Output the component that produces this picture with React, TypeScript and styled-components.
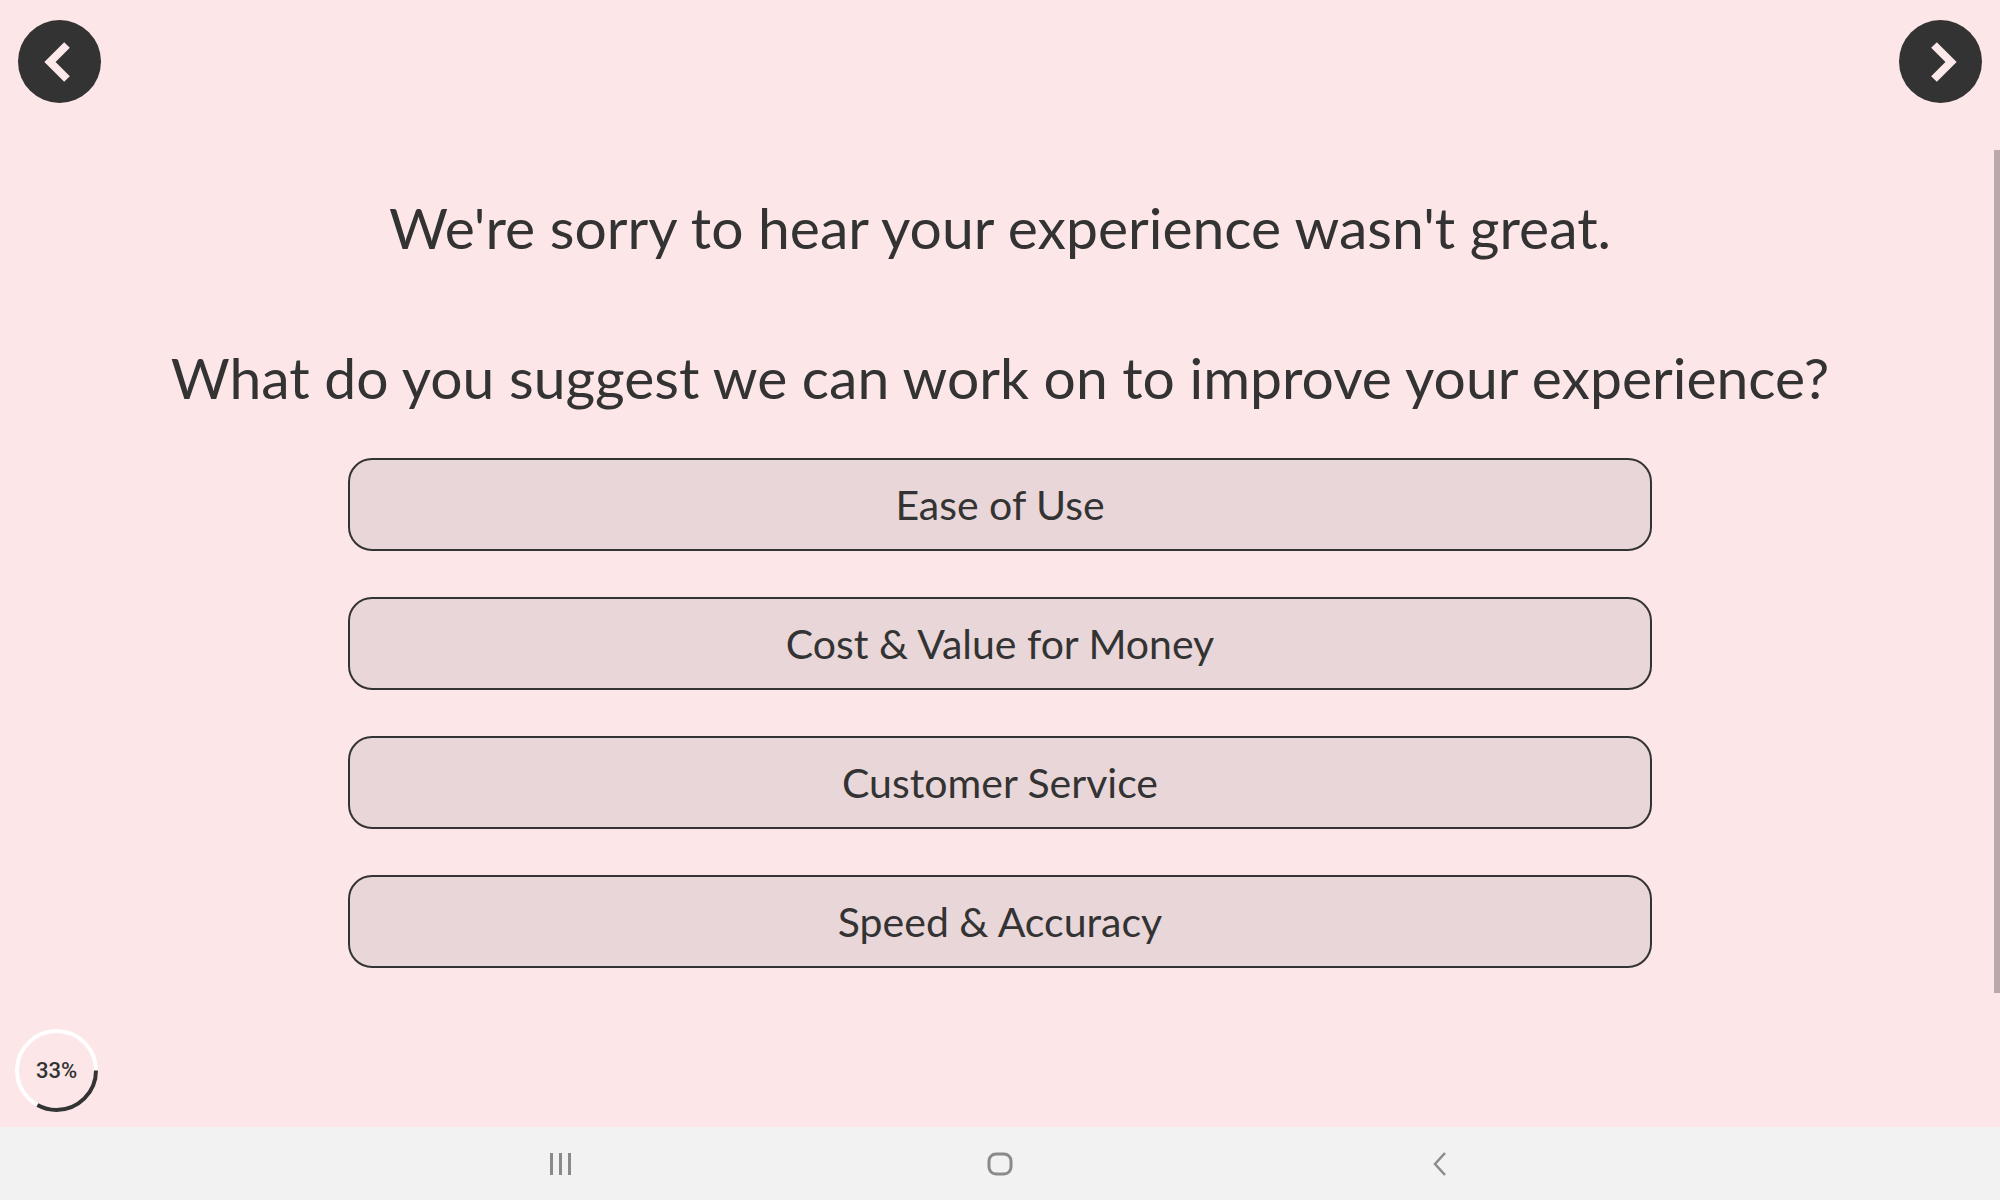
import React from "react";
import styled, {createGlobalStyle} from "styled-components";

const GlobalStyle = createGlobalStyle`
  html, body {
    margin: 0;
    padding: 0;
    background: #fde6e8;
  }
  * {
    box-sizing: border-box;
  }
`

const Screen = styled.div`
  width: 2000px;
  height: 1200px;
  display: flex;
  flex-direction: column;
  overflow: hidden;
  font-family: 'Lato', 'Noto Sans', sans-serif;
  color: #333333;
`

const Main = styled.div`
  position: relative;
  flex: 1;
  display: flex;
  flex-direction: column;
  background: #fde6e8;
`

const TopBar = styled.div`
  display: flex;
  justify-content: space-between;
  padding: 20px 18px 0 18px;
`

const RoundButton = styled.button<{ $dir: "left" | "right" }>`
  width: 83px;
  height: 83px;
  border-radius: 50%;
  border: none;
  padding: 0;
  margin: 0;
  background: #333333;
  display: flex;
  align-items: center;
  justify-content: center;
  cursor: pointer;

  svg {
    display: block;
    margin-left: ${p => p.$dir === "left" ? "-6px" : "6px"};
  }
`

const Content = styled.div`
  display: flex;
  flex-direction: column;
  align-items: center;
  margin-top: 96px;
`

const Heading = styled.h1<{ $gap: number }>`
  margin: 0 0 ${p => p.$gap}px 0;
  font-size: 57px;
  line-height: 1;
  font-weight: 400;
  text-align: center;
  white-space: nowrap;
`

const Options = styled.div`
  display: flex;
  flex-direction: column;
  gap: 46px;
`

const Option = styled.button`
  width: 1304px;
  height: 93px;
  border: 2px solid #333333;
  border-radius: 24px;
  background: #e9d6d8;
  color: #333333;
  font-family: 'Lato', 'Noto Sans', sans-serif;
  font-size: 41px;
  line-height: 1;
  display: flex;
  align-items: center;
  justify-content: center;
  cursor: pointer;
`

const Footer = styled.div`
  margin-top: auto;
  padding: 0 0 15px 15px;
`

const Progress = styled.div`
  position: relative;
  width: 83px;
  height: 83px;
  display: flex;
  align-items: center;
  justify-content: center;
`

const ProgressLabel = styled.span`
  position: relative;
  font-family: 'Roboto', 'Liberation Sans', sans-serif;
  font-size: 22px;
  font-weight: 500;
  color: #333333;
`

const Ring = styled.svg`
  position: absolute;
  inset: 0;
`

const Scrollbar = styled.div`
  position: absolute;
  right: 0;
  top: 150px;
  width: 6px;
  height: 843px;
  background: #b9a9aa;
`

const NavBar = styled.div`
  height: 73px;
  background: #f2f2f2;
  display: flex;
  justify-content: center;
  align-items: center;
  gap: 400px;
`

const NavSlot = styled.div`
  width: 40px;
  height: 40px;
  display: flex;
  align-items: center;
  justify-content: center;
`

const options = ["Ease of Use", "Cost & Value for Money", "Customer Service", "Speed & Accuracy"];

const ProgressRing = ({value}: { value: number }) => {
  const r = 39.5;
  const c = 2 * Math.PI * r;
  return (
    <Progress>
      <Ring width="83" height="83" viewBox="0 0 83 83">
        <circle cx="41.5" cy="41.5" r={r} fill="none" stroke="#ffffff" strokeWidth="4"/>
        <circle cx="41.5" cy="41.5" r={r} fill="none" stroke="#333333" strokeWidth="4"
                strokeDasharray={`${c * value / 100} ${c}`}/>
      </Ring>
      <ProgressLabel>{value}%</ProgressLabel>
    </Progress>
  );
};

const App = () => {
  return (
    <>
      <GlobalStyle/>
      <Screen>
        <Main>
          <TopBar>
            <RoundButton $dir="left" aria-label="Previous">
              <svg width="28" height="40" viewBox="0 0 28 40">
                <polyline points="24,3 7,20 24,37" fill="none" stroke="#fde8ea" strokeWidth="8"/>
              </svg>
            </RoundButton>
            <RoundButton $dir="right" aria-label="Next">
              <svg width="28" height="40" viewBox="0 0 28 40">
                <polyline points="4,3 21,20 4,37" fill="none" stroke="#fde8ea" strokeWidth="8"/>
              </svg>
            </RoundButton>
          </TopBar>

          <Content>
            <Heading $gap={93}>We're sorry to hear your experience wasn't great.</Heading>
            <Heading $gap={52}>What do you suggest we can work on to improve your experience?</Heading>
            <Options>
              {options.map(o => (
                <Option key={o}>{o}</Option>
              ))}
            </Options>
          </Content>

          <Footer>
            <ProgressRing value={33}/>
          </Footer>

          <Scrollbar/>
        </Main>

        <NavBar>
          <NavSlot>
            <svg width="24" height="24" viewBox="0 0 24 24">
              <rect x="2" y="1" width="3" height="22" fill="#8a8a8a"/>
              <rect x="11" y="1" width="3" height="22" fill="#8a8a8a"/>
              <rect x="20" y="1" width="3" height="22" fill="#8a8a8a"/>
            </svg>
          </NavSlot>
          <NavSlot>
            <svg width="26" height="24" viewBox="0 0 26 24">
              <rect x="2" y="2" width="22" height="20" rx="7" fill="none" stroke="#8a8a8a" strokeWidth="3"/>
            </svg>
          </NavSlot>
          <NavSlot>
            <svg width="16" height="24" viewBox="0 0 16 24">
              <polyline points="13,1 3,12 13,23" fill="none" stroke="#8a8a8a" strokeWidth="2.5"/>
            </svg>
          </NavSlot>
        </NavBar>
      </Screen>
    </>
  );
};

export default App;
